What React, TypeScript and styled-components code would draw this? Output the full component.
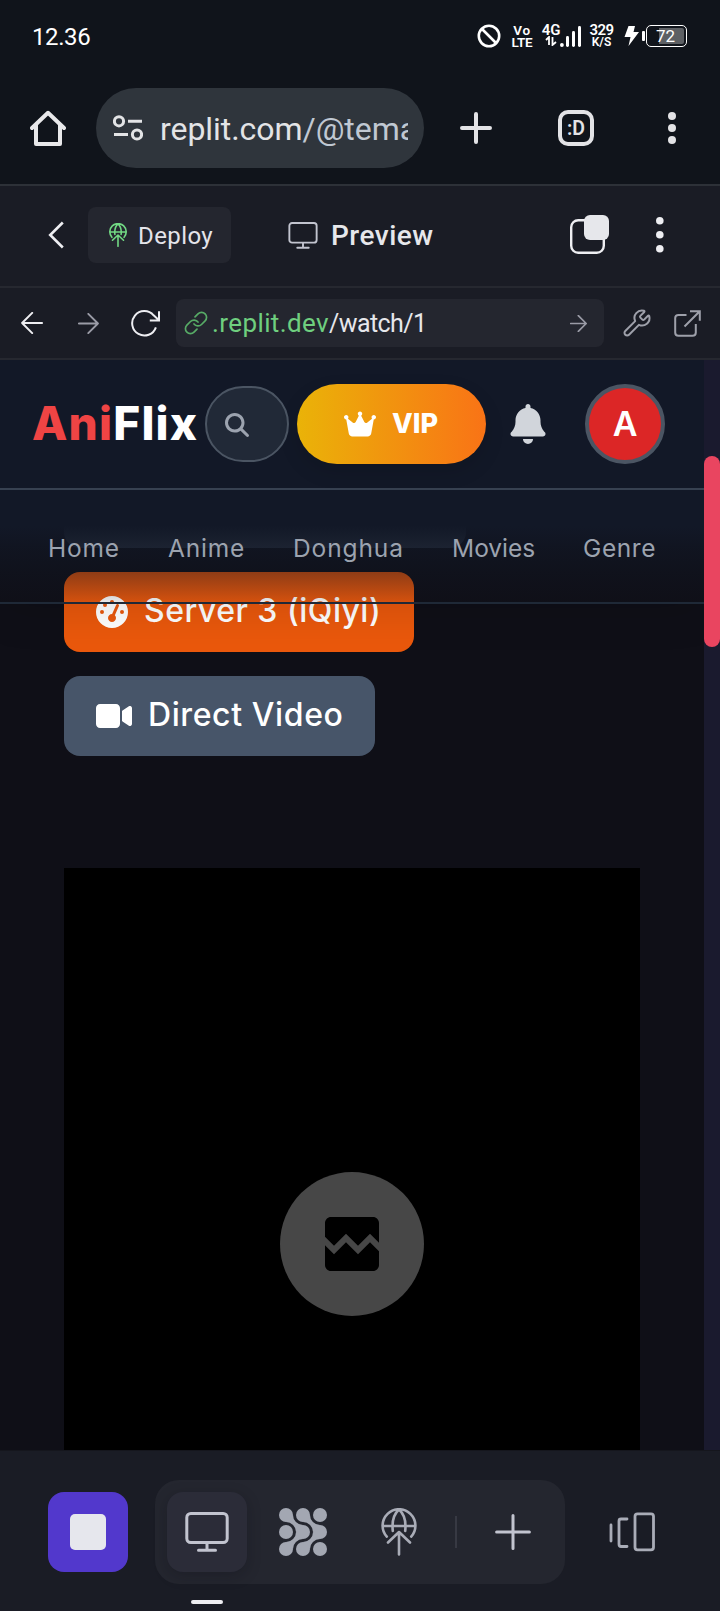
import React from "react";
import styled, { createGlobalStyle } from "styled-components";
import { FaBell, FaCrown, FaGaugeHigh, FaMagnifyingGlass, FaVideo } from "react-icons/fa6";
import { MdBrokenImage } from "react-icons/md";
import { Wrench } from "lucide-react";

const Global = createGlobalStyle`
  * { box-sizing: border-box; }
  body { margin: 0; background: #0f0f17; font-family: Roboto, "Liberation Sans", sans-serif; }
  svg { display: block; flex: none; }
`;

const Screen = styled.div`
  width: 720px;
  height: 1611px;
  display: flex;
  flex-direction: column;
  overflow: hidden;
  white-space: nowrap;
`;

/* Android status bar */
const StatusBar = styled.div`
  height: 72px;
  flex: none;
  padding: 0 33px 0 32px;
  display: flex;
  align-items: center;
  justify-content: space-between;
  background: #10141b;
  color: #fff;
`;
const Clock = styled.span`
  font-size: 24px;
  letter-spacing: -0.4px;
  line-height: 28px;
  margin-top: 1px;
`;
const StatusIcons = styled.div`
  display: flex;
  align-items: center;
`;
const Stack = styled.div<{ $left: number; $width: number }>`
  margin-left: ${(p) => p.$left}px;
  width: ${(p) => p.$width}px;
  height: 24px;
  display: flex;
  flex-direction: column;
  align-items: center;
  font-weight: 600;
`;
const Tiny = styled.span<{ $size: number; $gap?: number }>`
  font-size: ${(p) => p.$size}px;
  line-height: 12px;
  letter-spacing: ${(p) => p.$gap ?? 0}px;
`;
const Battery = styled.div`
  margin-left: 1px;
  width: 41px;
  height: 22px;
  border: 1.6px solid #fff;
  border-radius: 5px;
  padding: 2px;
  display: flex;
`;
const BatteryFill = styled.div`
  flex: 1;
  border-radius: 2px;
  background: linear-gradient(90deg, transparent 28%, #5d6064 28%);
  font-size: 17px;
  line-height: 16px;
  padding-left: 7px;
`;
const BatteryNub = styled.div`
  width: 3px;
  height: 10px;
  margin-left: 3px;
  border-radius: 1px;
  background: #fff;
`;

/* Browser toolbar */
const BrowserBar = styled.div`
  height: 114px;
  flex: none;
  padding: 16px 35px 0 30px;
  display: flex;
  align-items: flex-start;
  background: #10141b;
  border-bottom: 2px solid #2d3138;
`;
const BarSlot = styled.div<{ $left?: number }>`
  height: 80px;
  margin-left: ${(p) => p.$left ?? 0}px;
  display: flex;
  align-items: center;
`;
const AddressPill = styled.div`
  width: 328px;
  height: 80px;
  margin-left: 30px;
  border-radius: 40px;
  background: #2f353c;
  padding: 0 16px 0 17px;
  display: flex;
  align-items: center;
`;
const Address = styled.div`
  flex: 1;
  margin-left: 17px;
  overflow: hidden;
  font-size: 32px;
  line-height: 40px;
  margin-top: 2px;
  letter-spacing: -0.05px;
  color: #e3e4e6;
`;
const AddressPath = styled.span`
  color: #c0c8d2;
`;
const TabCount = styled.div`
  width: 36px;
  height: 36px;
  border: 4px solid #e3e3e6;
  border-radius: 10px;
  color: #e3e3e6;
  font-size: 19.5px;
  font-weight: 600;
  line-height: 29px;
  text-align: center;
`;

/* Workspace header */
const WorkspaceBar = styled.div`
  height: 102px;
  flex: none;
  padding: 0 56px 2px 48px;
  display: flex;
  align-items: center;
  background: #1a1c25;
  border-bottom: 2px solid #262830;
`;
const DeployButton = styled.div`
  width: 143px;
  height: 56px;
  margin-left: 24px;
  padding-left: 21px;
  border-radius: 8px;
  background: #24262f;
  color: #e4e4ea;
  display: flex;
  align-items: center;
  gap: 11px;
  font-size: 24px;
  line-height: 30px;
  letter-spacing: 0.4px;
`;
const DeployLabel = styled.span`
  padding-top: 2px;
`;
const PaneTitle = styled.div`
  margin-left: 57px;
  width: 282px;
  display: flex;
  align-items: center;
  gap: 13px;
  color: #e6e7eb;
  font-size: 28px;
  font-weight: 500;
  letter-spacing: 0.5px;
`;
const MoreSlot = styled.div`
  margin-left: 47px;
`;

/* Preview address row */
const PreviewBar = styled.div`
  height: 72px;
  flex: none;
  padding-left: 21px;
  display: flex;
  align-items: center;
  background: #1a1c25;
  border-bottom: 2px solid #262830;
`;
const NavGlyph = styled.div<{ $left?: number }>`
  margin-left: ${(p) => p.$left ?? 0}px;
`;
const PreviewField = styled.div`
  width: 428px;
  height: 48px;
  margin-left: 15px;
  padding: 0 17px 0 8px;
  border-radius: 8px;
  background: #24262f;
  display: flex;
  align-items: center;
  font-size: 26px;
  color: #e6e7eb;
`;
const Host = styled.span`
  margin-left: 4px;
  color: #6fcf7f;
  letter-spacing: 0.4px;
`;
const Path = styled.span`
  font-size: 25px;
  letter-spacing: -0.6px;
  padding-top: 1px;
`;
const Grow = styled.div`
  flex: 1;
`;

/* Previewed site */
const Viewport = styled.div`
  height: 1090px;
  flex: none;
  display: flex;
  background: #0f0f17;
  font-family: Inter, "Liberation Sans", sans-serif;
`;
const Page = styled.div`
  width: 704px;
  position: relative;
  overflow: hidden;
`;
const Scroller = styled.div`
  height: 1090px;
  padding: 108px 64px 0;
  overflow: hidden;
`;
const ServerList = styled.div`
  display: flex;
  flex-direction: column;
  gap: 24px;
`;
const ServerButton = styled.div<{ $bg: string; $width: number }>`
  width: ${(p) => p.$width}px;
  height: 80px;
  padding-left: 32px;
  border-radius: 16px;
  background: ${(p) => p.$bg};
  color: #fff;
  display: flex;
  align-items: center;
  gap: 16px;
  font-size: 32px;
  line-height: 40px;
  font-weight: 500;
`;
const ServerName = styled.span<{ $by: number }>`
  padding-bottom: 2px;
  letter-spacing: ${(p) => p.$by}px;
`;
const Player = styled.div`
  height: 752px;
  margin-top: 112px;
  background: #000;
  display: flex;
  align-items: center;
  justify-content: center;
`;
const BrokenBadge = styled.div`
  width: 144px;
  height: 144px;
  border-radius: 50%;
  background: #474747;
  color: #000;
  display: flex;
  align-items: center;
  justify-content: center;
`;
const SiteHeader = styled.div`
  position: absolute;
  top: 0;
  left: 0;
  width: 704px;
  box-shadow: 0 8px 40px rgba(0, 0, 0, 0.12);
`;
const TopBar = styled.div`
  height: 130px;
  padding: 0 39px 0 32px;
  display: flex;
  align-items: center;
  background: #121827;
  border-bottom: 2px solid #374151;
`;
const Logo = styled.div`
  width: 173px;
  padding-bottom: 2px;
  font-size: 46px;
  font-weight: 800;
  letter-spacing: 1.2px;
  color: #fff;
`;
const LogoAccent = styled.span`
  color: #ef4444;
`;
const SearchPill = styled.div`
  width: 84px;
  height: 76px;
  padding: 2px 0 0 18px;
  border: 2px solid #4b5563;
  border-radius: 38px;
  background: #212937;
  color: #9ca3af;
  display: flex;
  align-items: center;
`;
const VipButton = styled.div`
  width: 189px;
  height: 80px;
  margin-left: 8px;
  padding-left: 47px;
  border-radius: 40px;
  background: linear-gradient(90deg, #eab308, #f97316);
  box-shadow: 0 8px 20px rgba(0, 0, 0, 0.12);
  color: #fff;
  display: flex;
  align-items: center;
  gap: 16px;
  font-size: 27px;
  font-weight: 800;
`;
const VipLabel = styled.span`
  padding-bottom: 2px;
`;
const BellSlot = styled.div`
  margin-left: 22px;
  color: #d1d5db;
`;
const Avatar = styled.div`
  width: 80px;
  height: 80px;
  margin-left: 37px;
  border: 4px solid #4b5563;
  border-radius: 50%;
  background: #dc2626;
  color: #fff;
  font-size: 34px;
  font-weight: 600;
  line-height: 71px;
  text-align: center;
`;
const SiteNav = styled.div`
  height: 114px;
  padding: 0 0 0 48px;
  display: flex;
  align-items: center;
  border-bottom: 2px solid #1f2937;
  background: linear-gradient(
    180deg,
    #121827 0,
    #121827 36px,
    rgba(17, 22, 35, 0.8) 58px,
    rgba(17, 22, 35, 0.42) 82px,
    rgba(17, 20, 30, 0.1) 112px
  );
`;
const NavLink = styled.span<{ $width: number; $by: number }>`
  width: ${(p) => p.$width}px;
  margin-top: 4px;
  color: #9ca3af;
  font-size: 24.5px;
  letter-spacing: ${(p) => p.$by}px;
`;
const ScrollTrack = styled.div`
  width: 16px;
  height: 1090px;
  padding-top: 96px;
  background: #1a1a2e;
`;
const ScrollThumb = styled.div`
  height: 191px;
  border-radius: 8px;
  background: #e94560;
`;

/* Workspace dock */
const Dock = styled.div`
  height: 161px;
  flex: none;
  position: relative;
  padding: 29px 0 0 48px;
  display: flex;
  align-items: flex-start;
  background: #1a1c25;
  border-top: 1px solid #15161d;
`;
const StopButton = styled.div`
  width: 80px;
  height: 80px;
  margin-top: 12px;
  border-radius: 16px;
  background: #5238cc;
  display: flex;
  align-items: center;
  justify-content: center;
`;
const StopSquare = styled.div`
  width: 36px;
  height: 36px;
  border-radius: 5px;
  background: #e6e7ed;
`;
const Tray = styled.div`
  width: 410px;
  height: 104px;
  margin-left: 27px;
  padding-left: 12px;
  border-radius: 24px;
  background: #24262f;
  display: flex;
  align-items: center;
`;
const ActiveTool = styled.div`
  width: 80px;
  height: 80px;
  border-radius: 16px;
  background: #2b2c38;
  box-shadow: 0 4px 14px rgba(10, 12, 20, 0.25);
  display: flex;
  align-items: center;
  justify-content: center;
`;
const ToolSlot = styled.div<{ $left: number }>`
  margin-left: ${(p) => p.$left}px;
`;
const Divider = styled.div`
  width: 2px;
  height: 32px;
  margin-left: 38px;
  background: #373943;
`;
const SwitchSlot = styled.div`
  margin: 32px 0 0 44px;
`;
const Indicator = styled.div`
  position: absolute;
  left: 191px;
  top: 149px;
  width: 32px;
  height: 4px;
  border-radius: 2px;
  background: #eeeef2;
`;

const Dots = ({ r, gap, color }: { r: number; gap: number; color: string }) => (
  <svg width={r * 2} height={gap * 2 + r * 2} fill={color}>
    {[0, 1, 2].map((i) => (
      <circle key={i} cx={r} cy={r + gap * i} r={r} />
    ))}
  </svg>
);

const GlobeUp = ({ width, height, color, stroke }: { width: number; height: number; color: string; stroke: number }) => (
  <svg width={width} height={height} viewBox="0 0 36 48" fill="none" stroke={color} strokeWidth={stroke} strokeLinecap="round" strokeLinejoin="round">
    <path d="M5.8 28.6A16.4 16.4 0 1 1 30.2 28.6M1.8 18h32.4M11.8 23C10.8 14 13 6 18 1.6C23 6 25.2 14 24.2 23M18 46.5V24M7 34.5L18 24L29 34.5" />
  </svg>
);

const Arrow = ({ size, color, flip }: { size: number; color: string; flip?: boolean }) => (
  <svg width={size} height={size} viewBox="0 0 20 20" fill="none" stroke={color} strokeWidth={size > 18 ? 1.8 : 2} strokeLinecap="round" strokeLinejoin="round" transform={flip ? "scale(-1 1)" : undefined}>
    <path d="M.8 10H19M9.8 .8L19 10L9.8 19.2" />
  </svg>
);

const Monitor = ({ width, height, stroke, color }: { width: number; height: number; stroke: number; color: string }) => (
  <svg width={width} height={height} viewBox="0 0 44 40" fill="none" stroke={color} strokeWidth={stroke} strokeLinecap="round">
    <rect x="1.8" y="1.5" width="40.4" height="29" rx="4" />
    <path d="M22 31V38M13.5 38.2H30.5" />
  </svg>
);

export default function App() {
  return (
    <Screen>
      <Global />
      <StatusBar>
        <Clock>12.36</Clock>
        <StatusIcons>
          <svg width="24" height="24" fill="none" stroke="#fff" strokeWidth="2.6">
            <circle cx="12" cy="12" r="10.2" />
            <path d="M5 5L19 19" />
          </svg>
          <Stack $left={10} $width={22}>
            <Tiny $size={13.5} $gap={0.6}>Vo</Tiny>
            <Tiny $size={13.5} $gap={-0.2}>LTE</Tiny>
          </Stack>
          <Stack $left={9} $width={18}>
            <Tiny $size={15} $gap={-0.2}>4G</Tiny>
            <svg width="12" height="10" fill="none" stroke="#fff" strokeWidth="1.8">
              <path d="M1 4L4 1V9M11 6L7.5 9V1" />
            </svg>
          </Stack>
          <svg width="21" height="24" fill="#fff">
            <circle cx="1.9" cy="21" r="1.9" />
            <rect x="6" y="12" width="3" height="11" rx="1.4" />
            <rect x="12" y="7" width="3" height="16" rx="1.4" />
            <rect x="18" y="2" width="3" height="21" rx="1.4" />
          </svg>
          <Stack $left={8} $width={25}>
            <Tiny $size={15} $gap={-0.5}>329</Tiny>
            <Tiny $size={12}>K/S</Tiny>
          </Stack>
          <svg width="15" height="20" viewBox="0 0 15 20" fill="#fff" style={{ marginLeft: 10 }}>
            <path d="M4.5 0H11L9.5 6H15L4.5 20L6.5 11H.5Z" />
          </svg>
          <BatteryNub />
          <Battery>
            <BatteryFill>72</BatteryFill>
          </Battery>
        </StatusIcons>
      </StatusBar>

      <BrowserBar>
        <BarSlot>
          <svg width="36" height="36" fill="none" stroke="#e8e8ea" strokeWidth="4" strokeLinecap="round" strokeLinejoin="round">
            <path d="M2 18L18 2.8L34 18M6 15V34H30V15" />
          </svg>
        </BarSlot>
        <AddressPill>
          <svg width="30" height="26" fill="none" stroke="#e3e4e6" strokeWidth="3">
            <circle cx="6" cy="6.3" r="4.6" />
            <path d="M15 6.3H29M1 19.5H15" />
            <circle cx="24" cy="19.5" r="4.6" />
          </svg>
          <Address>
            replit.com<AddressPath>/@tema</AddressPath>
          </Address>
        </AddressPill>
        <BarSlot $left={36}>
          <svg width="32" height="32" stroke="#e3e3e6" strokeWidth="4" strokeLinecap="round">
            <path d="M16 2V30M2 16H30" />
          </svg>
        </BarSlot>
        <BarSlot $left={66}>
          <TabCount>:D</TabCount>
        </BarSlot>
        <BarSlot $left={74}>
          <Dots r={4} gap={12} color="#e3e3e6" />
        </BarSlot>
      </BrowserBar>

      <WorkspaceBar>
        <svg width="16" height="28" fill="none" stroke="#eeeef2" strokeWidth="2.6">
          <path d="M14.8 1.5L2.2 14L14.8 26.5" />
        </svg>
        <DeployButton>
          <GlobeUp width={18} height={24} color="#72d984" stroke={3.2} />
          <DeployLabel>Deploy</DeployLabel>
        </DeployButton>
        <PaneTitle>
          <Monitor width={30} height={27} stroke={2.8} color="#c2c4cf" />
          Preview
        </PaneTitle>
        <svg width="39" height="41" viewBox="0 0 39 41" fill="none">
          <rect x="1.2" y="5.2" width="32.6" height="32.6" rx="7" stroke="#eeeef2" strokeWidth="2.4" />
          <rect x="14" y="0" width="25" height="25" rx="6" fill="#e6e7eb" />
        </svg>
        <MoreSlot>
          <Dots r={3.8} gap={14} color="#eeeef2" />
        </MoreSlot>
      </WorkspaceBar>

      <PreviewBar>
        <Arrow size={22} color="#eeeef2" flip />
        <NavGlyph $left={35}>
          <Arrow size={21} color="#9a9ba6" />
        </NavGlyph>
        <NavGlyph $left={32}>
          <svg width="30" height="27" fill="none" stroke="#eeeef2" strokeWidth="2">
            <path d="M24.9 17.3A12.2 12.2 0 1 1 22.6 5.3L28 10.3M28 1.2V10.5H18.8" />
          </svg>
        </NavGlyph>
        <PreviewField>
          <svg width="24" height="24" viewBox="0 0 24 24" fill="none" stroke="#57ab66" strokeWidth="1.7" strokeLinecap="round">
            <path d="M10 13a5 5 0 0 0 7.5.5l3.6-3.6a5 5 0 0 0-7.1-7.1l-3 3M14 11a5 5 0 0 0-7.5-.5l-3.6 3.6a5 5 0 0 0 7.1 7.1l3-3" />
          </svg>
          <Host>.replit.dev</Host>
          <Path>/watch/1</Path>
          <Grow />
          <Arrow size={17} color="#9a9ba6" />
        </PreviewField>
        <NavGlyph $left={18}>
          <Wrench size={30} color="#9ea0aa" strokeWidth={1.6} />
        </NavGlyph>
        <NavGlyph $left={22}>
          <svg width="27" height="27" fill="none" stroke="#9ea0aa" strokeWidth="2">
            <path d="M12.5 5H4.5Q1.2 5 1.2 8V22.5Q1.2 25.8 4.5 25.8H18.5Q21.8 25.8 21.8 22.5V14M10.5 16.5L25 2M16 1.2H25.8V10.8" />
          </svg>
        </NavGlyph>
      </PreviewBar>

      <Viewport>
        <Page>
          <Scroller>
            <ServerList>
              <ServerButton $bg="#475569" $width={402} />
              <ServerButton $bg="#ea580c" $width={350}>
                <FaGaugeHigh size={32} />
                <ServerName $by={0.5}>Server 3 (iQiyi)</ServerName>
              </ServerButton>
              <ServerButton $bg="#475569" $width={311}>
                <FaVideo size={36} />
                <ServerName $by={0.6}>Direct Video</ServerName>
              </ServerButton>
            </ServerList>
            <Player>
              <BrokenBadge>
                <MdBrokenImage size={72} />
              </BrokenBadge>
            </Player>
          </Scroller>
          <SiteHeader>
            <TopBar>
              <Logo>
                <LogoAccent>Ani</LogoAccent>Flix
              </Logo>
              <SearchPill>
                <FaMagnifyingGlass size={24} />
              </SearchPill>
              <VipButton>
                <FaCrown size={32} />
                <VipLabel>VIP</VipLabel>
              </VipButton>
              <BellSlot>
                <FaBell size={40} />
              </BellSlot>
              <Avatar>A</Avatar>
            </TopBar>
            <SiteNav>
              <NavLink $width={120} $by={0.8}>Home</NavLink>
              <NavLink $width={125} $by={0.8}>Anime</NavLink>
              <NavLink $width={159} $by={0.9}>Donghua</NavLink>
              <NavLink $width={131} $by={0}>Movies</NavLink>
              <NavLink $width={80} $by={0.6}>Genre</NavLink>
            </SiteNav>
          </SiteHeader>
        </Page>
        <ScrollTrack>
          <ScrollThumb />
        </ScrollTrack>
      </Viewport>

      <Dock>
        <StopButton>
          <StopSquare />
        </StopButton>
        <Tray>
          <ActiveTool>
            <Monitor width={44} height={40} stroke={3} color="#c2c4cf" />
          </ActiveTool>
          <ToolSlot $left={32}>
            <svg width="48" height="48" fill="#a3a7b2">
              {[7, 24, 41].map((x) => [7, 24, 41].map((y) => <circle key={`${x}-${y}`} cx={x} cy={y} r="7" />))}
              {[0, 17].map((x) => (
                <g key={x} transform={`translate(${x} 0)`}>
                  <path d="M14 7A10 10 0 0 0 24 17L17 24A10 10 0 0 0 7 14Z" />
                  <path d="M14 41A10 10 0 0 1 24 31L17 24A10 10 0 0 1 7 34Z" />
                </g>
              ))}
            </svg>
          </ToolSlot>
          <ToolSlot $left={54}>
            <GlobeUp width={36} height={48} color="#a9acb7" stroke={2.6} />
          </ToolSlot>
          <Divider />
          <ToolSlot $left={38}>
            <svg width="36" height="36" stroke="#c2c4cf" strokeWidth="3" strokeLinecap="round">
              <path d="M18 1.6V34.4M1.6 18H34.4" />
            </svg>
          </ToolSlot>
        </Tray>
        <SwitchSlot>
          <svg width="46" height="40" fill="none" stroke="#a9acb7" strokeWidth="2.8" strokeLinecap="round" strokeLinejoin="round">
            <path d="M2 13V29M18 7H12Q10 7 10 9V32Q10 34.5 12 34.5H18" />
            <rect x="26" y="1.8" width="18.5" height="36" rx="2.5" />
          </svg>
        </SwitchSlot>
        <Indicator />
      </Dock>
    </Screen>
  );
}
